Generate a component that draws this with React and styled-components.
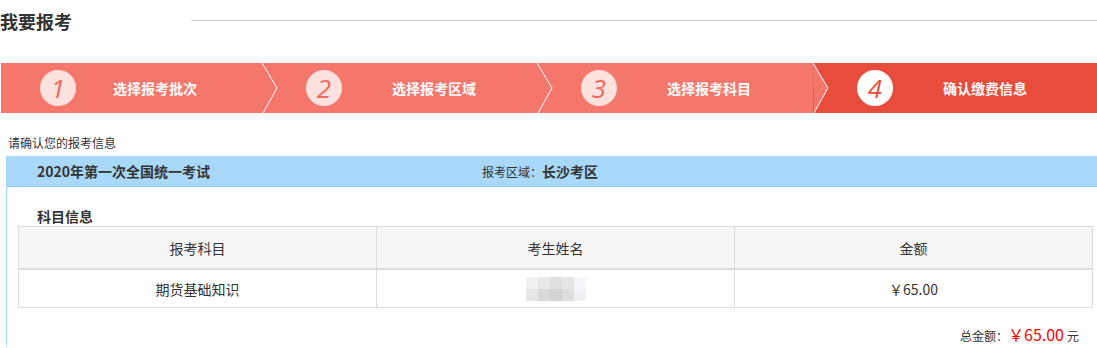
import React from 'react'
import styled, { createGlobalStyle } from 'styled-components'

const GlobalStyle = createGlobalStyle`
  body {
    margin: 0;
    background: #fff;
    color: #333;
    font-family: 'Noto Sans CJK SC', 'Liberation Sans', sans-serif;
  }
`

const Page = styled.div`
  width: 1097px;
  overflow: hidden;
`

const TitleRow = styled.div`
  display: flex;
  align-items: center;
  height: 41px;
`

const Title = styled.h2`
  margin: 0;
  font-size: 18px;
  font-weight: 700;
  line-height: 20px;
  color: #333;
`

const TitleLine = styled.div`
  flex: 1;
  height: 1px;
  margin-left: 119px;
  background: #ccc;
`

const Steps = styled.div`
  display: grid;
  grid-template-columns: 261px 275px 276px 1fr;
  height: 50px;
  margin: 22px 0 0 1px;
`

const Step = styled.div`
  position: relative;
  display: flex;
  align-items: center;
  padding-left: ${(p) => (p.$first ? 39 : 44)}px;
  background: ${(p) => (p.$active ? '#e74c3c' : '#f5766a')};
`

const Arrow = styled.svg`
  position: absolute;
  top: 0;
  left: 100%;
  z-index: 1;
  width: 16px;
  height: 50px;
`

const Circle = styled.div`
  display: flex;
  align-items: center;
  justify-content: center;
  width: 36px;
  height: 36px;
  border-radius: 50%;
  background: ${(p) => (p.$active ? '#fff' : '#fde1de')};
  color: ${(p) => (p.$active ? '#e74c3c' : '#f0685d')};
  font-family: 'Open Sans', 'Liberation Sans', sans-serif;
  font-style: italic;
  font-weight: 400;
  font-size: 26px;
  line-height: 1;
`

const StepLabel = styled.span`
  margin-left: ${(p) => (p.$first ? 37 : 50)}px;
  color: #fff;
  font-size: 14px;
  font-weight: 700;
  line-height: 20px;
`

const Intro = styled.p`
  margin: 22px 0 0;
  padding-left: 8px;
  font-size: 12px;
  line-height: 16px;
`

const Panel = styled.div`
  margin: 5px 0 0 6px;
  border-left: 1px solid #a6d8f8;
`

const PanelHead = styled.div`
  display: flex;
  align-items: center;
  height: 30px;
  padding-left: 30px;
  background: #a8d9f9;
  border-bottom: 1px solid #92cdf3;
`

const ExamName = styled.div`
  width: 445px;
  font-size: 14px;
  font-weight: 700;
  line-height: 20px;
`

const Region = styled.div`
  font-size: 12px;
  line-height: 20px;

  b {
    font-size: 14px;
  }
`

const PanelBody = styled.div`
  padding: 0 4px 0 11px;
`

const SectionTitle = styled.h3`
  margin: 20px 0 1px;
  padding-left: 19px;
  font-size: 14px;
  font-weight: 700;
  line-height: 18px;
`

const Table = styled.table`
  width: 100%;
  border-collapse: collapse;
  table-layout: fixed;
  font-size: 14px;

  th, td {
    border: 1px solid #ddd;
    text-align: center;
    color: #333;
  }
  th {
    height: 39px;
    font-weight: 400;
    background: #f6f6f6;
    border-bottom: 2px solid #ddd;
  }
  td {
    height: 35px;
  }
`

const Mosaic = styled.div`
  display: inline-grid;
  grid-template-columns: repeat(5, 12px);
  grid-auto-rows: 12px;
  vertical-align: middle;
  filter: blur(0.4px);
`

const Total = styled.div`
  display: flex;
  justify-content: flex-end;
  align-items: baseline;
  margin-top: 15px;
  padding-right: 14px;
  font-size: 12px;
  line-height: 22px;
`

const Price = styled.span`
  margin: 0 3px 0 0;
  color: #f00;
  font-size: 16px;
`

const steps = ['选择报考批次', '选择报考区域', '选择报考科目', '确认缴费信息']
const mosaic = [
  '#f0f0f0', '#e9e9e9', '#dfdfdf', '#e5e5e5', '#f4f6f9',
  '#e6e6e6', '#d9d9d9', '#d3d3d3', '#dddddd', '#eff1f4',
]

const App = () => {
   return (
      <Page>
         <GlobalStyle/>
         <TitleRow>
            <Title>我要报考</Title>
            <TitleLine/>
         </TitleRow>
         <Steps>
            {steps.map((label, i) => {
               const active = i === steps.length - 1
               return (
                  <Step key={label} $first={i === 0} $active={active}>
                     <Circle $active={active}>{i + 1}</Circle>
                     <StepLabel $first={i === 0}>{label}</StepLabel>
                     {!active && (
                        <Arrow viewBox="0 0 16 50">
                           <polygon points="0,0 15,25 1,50" fill="#f5766a"/>
                           <polyline points="0,0 15,25 1,50" fill="none" stroke="#fff" strokeWidth="1"/>
                        </Arrow>
                     )}
                  </Step>
               )
            })}
         </Steps>
         <Intro>请确认您的报考信息</Intro>
         <Panel>
            <PanelHead>
               <ExamName>2020年第一次全国统一考试</ExamName>
               <Region>报考区域：<b>长沙考区</b></Region>
            </PanelHead>
            <PanelBody>
               <SectionTitle>科目信息</SectionTitle>
               <Table>
                  <thead>
                  <tr>
                     <th>报考科目</th>
                     <th>考生姓名</th>
                     <th>金额</th>
                  </tr>
                  </thead>
                  <tbody>
                  <tr>
                     <td>期货基础知识</td>
                     <td>
                        <Mosaic>
                           {mosaic.map((c, i) => <span key={i} style={{ background: c }}/>)}
                        </Mosaic>
                     </td>
                     <td>￥65.00</td>
                  </tr>
                  </tbody>
               </Table>
               <Total>
                  总金额：<Price>￥65.00</Price>元
               </Total>
            </PanelBody>
         </Panel>
      </Page>
   )
}

export default App
